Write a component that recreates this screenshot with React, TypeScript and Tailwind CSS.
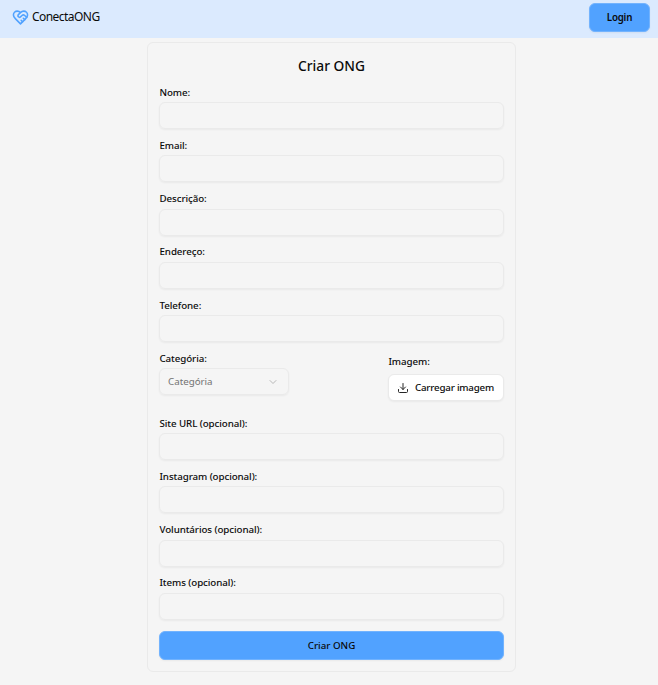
import { ChevronDown, Download } from "lucide-react";

function HeartHandshakeIcon() {
  return (
    <svg
      viewBox="0 0 24 24"
      className="size-[17px] text-[#51a2ff]"
      fill="none"
      stroke="currentColor"
      strokeWidth="2.2"
      strokeLinecap="round"
      strokeLinejoin="round"
    >
      <path d="M19 14c1.49-1.46 3-3.21 3-5.5A5.5 5.5 0 0 0 16.5 3c-1.76 0-3 .5-4.5 2-1.5-1.5-2.74-2-4.5-2A5.5 5.5 0 0 0 2 8.5c0 2.3 1.5 4.05 3 5.5l7 7Z" />
      <path d="M12 5 9.04 7.96a2.17 2.17 0 0 0 0 3.08c.82.82 2.13.85 3 .07l2.07-1.9a2.82 2.82 0 0 1 3.79 0l2.96 2.66" />
      <path d="m18 15-2-2" />
      <path d="m15 18-2-2" />
    </svg>
  );
}

function Label({ text }: { text: string }) {
  return (
    <span className="block h-3.5 pl-[0.5px] text-[9.75px] leading-[15px] font-medium tracking-[-0.08px] whitespace-nowrap">
      {text}
    </span>
  );
}

function Field({ label }: { label: string }) {
  return (
    <label className="flex h-[53.25px] flex-col gap-[3.5px]">
      <Label text={label} />
      <input
        type="text"
        className="h-[27px] w-full rounded-md border border-[#eaeaea] bg-transparent px-2 text-[10px] shadow-xs outline-none"
      />
    </label>
  );
}

export default function App() {
  return (
    <div className="min-h-[685px] bg-[#f5f5f5] font-['Noto_Sans',sans-serif] text-[#0a0a0a]">
      <header className="flex h-[38px] items-center justify-between bg-[#dbeafe] pr-2 pb-1 pl-3">
        <div className="flex items-center gap-[3px]">
          <HeartHandshakeIcon />
          <span className="text-[12px] leading-4 tracking-[-0.55px]">ConectaONG</span>
        </div>
        <button className="h-[29px] w-[61px] rounded-md border border-[#72b3fe] bg-[#51a2ff] pt-0.5 text-[9.75px] font-semibold tracking-[-0.2px] shadow-xs">
          Login
        </button>
      </header>

      <main className="mt-1 ml-[147px] flex h-[630px] w-[369px] flex-col rounded-md border border-[#eaeaea] px-[11px] pt-[13px]">
        <h1 className="mb-[8.5px] h-5 text-center text-[13.75px] leading-5 font-medium">Criar ONG</h1>

        <Field label="Nome:" />
        <Field label="Email:" />
        <Field label="Descrição:" />
        <Field label="Endereço:" />
        <Field label="Telefone:" />

        <div className="flex h-[64.75px] justify-between">
          <div className="flex flex-col gap-[3.5px]">
            <Label text="Categória:" />
            <button className="flex h-[27px] w-[130px] items-center justify-between rounded-md border border-[#eaeaea] pr-[9px] pl-2 text-[9.75px] text-[#737373] shadow-xs">
              <span className="pt-0.5">Categória</span>
              <ChevronDown className="size-3 text-[#a3a3a3]" strokeWidth={1.5} />
            </button>
          </div>
          <div className="flex flex-col gap-[3.5px] pt-[3px]">
            <Label text="Imagem:" />
            <button className="mt-[3px] flex h-[27px] w-[116px] items-center gap-1.5 rounded-md border border-[#eaeaea] bg-white pl-2 text-[9.75px] font-medium tracking-[-0.2px] whitespace-nowrap shadow-xs">
              <Download className="size-3 shrink-0 text-[#262626]" strokeWidth={2} />
              <span className="pt-0.5">Carregar imagem</span>
            </button>
          </div>
        </div>

        <Field label="Site URL (opcional):" />
        <Field label="Instagram (opcional):" />
        <Field label="Voluntários (opcional):" />
        <Field label="Items (opcional):" />

        <button className="mt-[2.5px] h-[29px] w-full shrink-0 rounded-md border border-[#72b3fe] bg-[#51a2ff] pt-px text-[9.75px] font-medium shadow-xs">
          Criar ONG
        </button>
      </main>
    </div>
  );
}
